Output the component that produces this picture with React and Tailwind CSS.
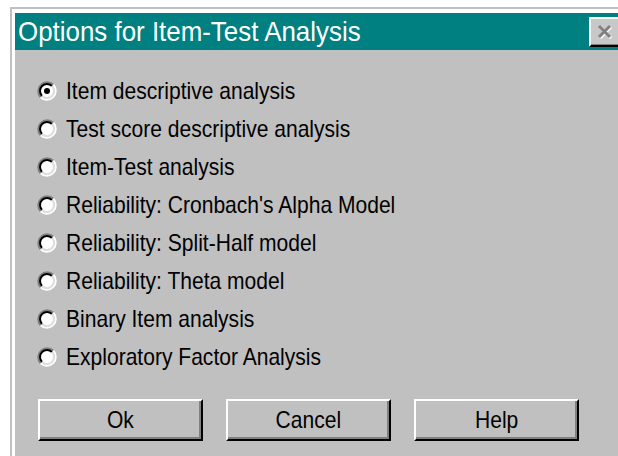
import React from "react";

const options = [
  "Item descriptive analysis",
  "Test score descriptive analysis",
  "Item-Test analysis",
  "Reliability: Cronbach's Alpha Model",
  "Reliability: Split-Half model",
  "Reliability: Theta model",
  "Binary Item analysis",
  "Exploratory Factor Analysis",
];

function Radio({ checked }) {
  return (
    <svg width="20" height="20" viewBox="0 0 20 20" className="shrink-0">
      <circle cx="10" cy="10" r="7" fill="#ffffff" />
      <path d="M3.64 16.36 A9 9 0 0 1 16.36 3.64" fill="none" stroke="#808080" strokeWidth="2" />
      <path d="M16.36 3.64 A9 9 0 0 1 3.64 16.36" fill="none" stroke="#ffffff" strokeWidth="2" />
      <path d="M5.05 14.95 A7 7 0 0 1 14.95 5.05" fill="none" stroke="#000000" strokeWidth="2" />
      <path d="M14.95 5.05 A7 7 0 0 1 5.05 14.95" fill="none" stroke="#dfdfdf" strokeWidth="2" />
      {checked && <circle cx="10" cy="10" r="3" fill="#000000" />}
    </svg>
  );
}

function Button({ children }) {
  return (
    <button className="w-[165px] h-[42px] bg-[#c0c0c0] border-2 border-t-white border-l-white border-b-black border-r-black shadow-[inset_-2px_-2px_0_#808080] text-black flex items-center justify-center">
      <span className="inline-block text-[24px] leading-none scale-x-[0.877] origin-center">{children}</span>
    </button>
  );
}

export default function App() {
  return (
    <div className="w-[618px] h-[456px] overflow-hidden bg-white font-['Liberation_Sans',Arial,sans-serif]">
      <div className="ml-[10px] mt-[7px] w-[620px] h-[460px] border-l-2 border-t-2 border-[#c0c0c0] bg-white pl-[3px] pt-[4px] flex flex-col">
        {/* caption bar */}
        <div className="h-[37px] bg-[#008080] flex items-center justify-between pl-[3px] pr-[5px] shrink-0">
          <span className="inline-block text-white text-[28px] leading-none scale-x-[0.925] origin-left whitespace-nowrap">
            Options for Item-Test Analysis
          </span>
          <div className="w-[36px] h-[30px] bg-[#c8c8c8] border-t-2 border-l-2 border-t-white border-l-white border-b-2 border-r-2 border-b-black border-r-black shadow-[inset_-1px_-1px_0_#808080] flex items-center justify-center pr-[4px]">
            <svg width="18" height="18" viewBox="0 0 18 18">
              <path d="M3 3 L14 14 M14 3 L3 14" stroke="#ffffff" strokeWidth="3" transform="translate(1 1)" />
              <path d="M3 3 L14 14 M14 3 L3 14" stroke="#808080" strokeWidth="3" />
            </svg>
          </div>
        </div>
        {/* dialog body */}
        <div className="flex-1 bg-[#c0c0c0] pl-[22px] pt-[22px]">
          <div className="flex flex-col">
            {options.map((label, i) => (
              <div key={label} className="h-[38px] flex items-center gap-[9px]">
                <Radio checked={i === 0} />
                <span className="inline-block text-[24px] text-black leading-none scale-x-[0.877] origin-left whitespace-nowrap">
                  {label}
                </span>
              </div>
            ))}
          </div>
          <div className="flex gap-[23px] mt-[23px] ml-[1px]">
            <Button>Ok</Button>
            <Button>Cancel</Button>
            <Button>Help</Button>
          </div>
        </div>
      </div>
    </div>
  );
}
